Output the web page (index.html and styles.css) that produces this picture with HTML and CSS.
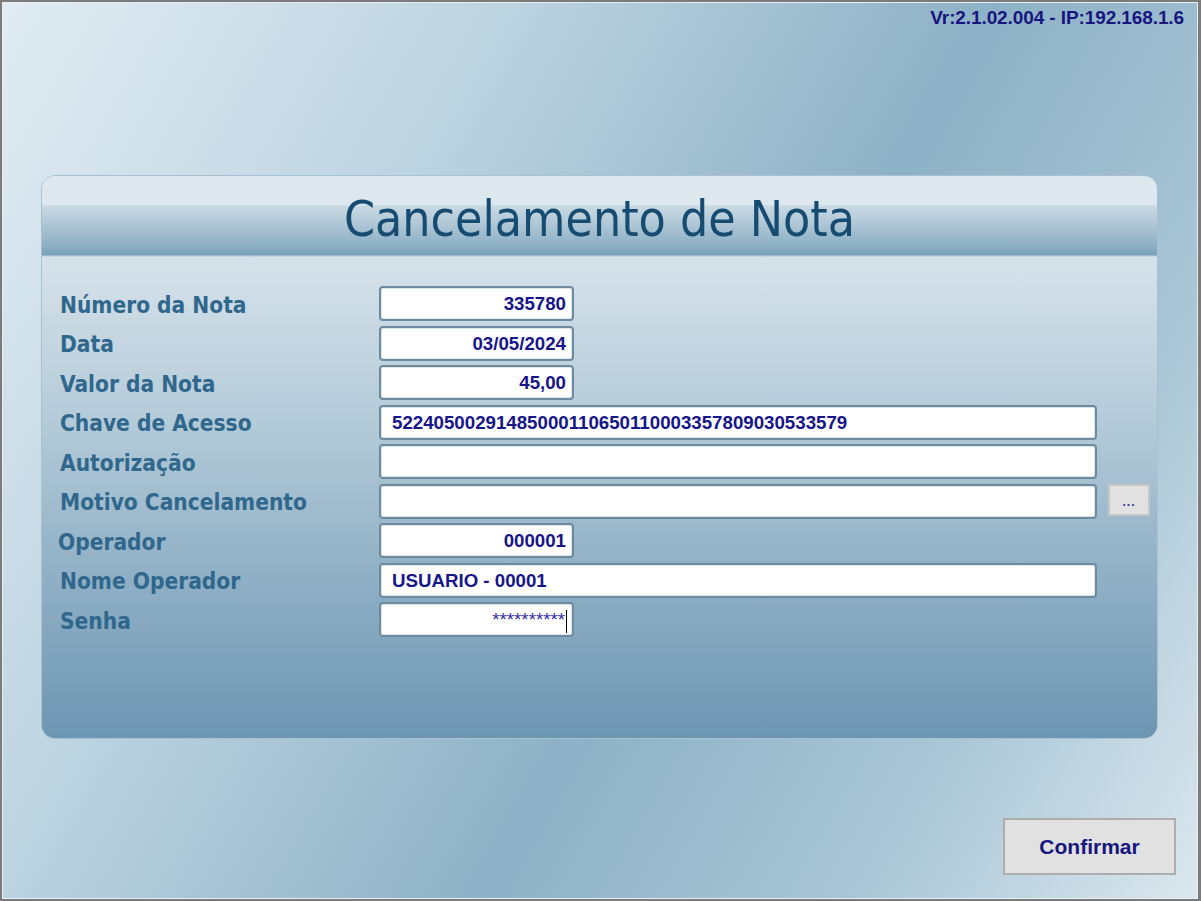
FILE: index.html
```html
<!DOCTYPE html>
<html lang="pt-BR">
<head>
    <meta charset="UTF-8" />
    <title>Cancelamento de Nota</title>
    <link rel="stylesheet" href="styles.css">
</head>
<body>
    <div class="window">
        <div class="version">Vr:2.1.02.004 - IP:192.168.1.6</div>

        <!-- painel principal -->
        <div class="panel">
            <div class="panel-head">
                <h1>Cancelamento de Nota</h1>
            </div>
            <div class="panel-body">
                <div class="form-row">
                    <label class="lbl">Número da Nota</label>
                    <div class="field short right">335780</div>
                </div>
                <div class="form-row">
                    <label class="lbl">Data</label>
                    <div class="field short right">03/05/2024</div>
                </div>
                <div class="form-row">
                    <label class="lbl">Valor da Nota</label>
                    <div class="field short right">45,00</div>
                </div>
                <div class="form-row">
                    <label class="lbl">Chave de Acesso</label>
                    <div class="field long">52240500291485000110650110003357809030533579</div>
                </div>
                <div class="form-row">
                    <label class="lbl">Autorização</label>
                    <div class="field long"></div>
                </div>
                <div class="form-row">
                    <label class="lbl">Motivo Cancelamento</label>
                    <div class="field long"></div>
                    <button type="button" class="btn-dots">...</button>
                </div>
                <div class="form-row">
                    <label class="lbl lbl-shift">Operador</label>
                    <div class="field short right">000001</div>
                </div>
                <div class="form-row">
                    <label class="lbl">Nome Operador</label>
                    <div class="field long">USUARIO - 00001</div>
                </div>
                <div class="form-row">
                    <label class="lbl">Senha</label>
                    <div class="field short right pw">**********<span class="caret"></span></div>
                </div>
            </div>
        </div>

        <div class="footer">
            <button type="button" class="btn-confirm">Confirmar</button>
        </div>
    </div>
</body>
</html>
```

FILE: styles.css
```css
html, body {
    margin:0;
    padding:0;
}
body {
    width:1201px;
    height:901px;
    overflow:hidden;
    font-family:"Liberation Sans", Arial, sans-serif;
}
.window {
    width:1201px;
    height:901px;
    box-sizing:border-box;
    border:2px solid #7b7b7b;
    border-right-width:3px;
    box-shadow:inset 0 0 0 1px #e4eef4;
    background:linear-gradient(120deg, #e1ecf3 0%, #bcd3e0 30%, #8db1c6 58%, #a9c6d6 80%, #dbe7ee 100%);
    display:flex;
    flex-direction:column;
}
.version {
    text-align:right;
    padding:5px 14px 0 0;
    font-size:19px;
    font-weight:bold;
    color:#17167f;
    letter-spacing:-0.1px;
}

/* painel */
.panel {
    margin:146px 0 0 39px;
    width:1117px;
    height:564px;
    border-radius:14px;
    overflow:hidden;
    border:1px solid #a8c2d2;
    box-sizing:border-box;
    display:flex;
    flex-direction:column;
}
.panel-head {
    height:81px;
    flex:none;
    background:linear-gradient(to bottom, #dde8ef 0, #dce7ee 29px, #c8d9e3 30px, #b4cad8 45px, #a3bfd0 55px, #8cafc4 70px, #79a1ba 79px, #c4d6e1 80px);
    text-align:center;
}
.panel-head h1 {
    margin:0;
    padding-top:3px;
    line-height:80px;
    font-family:"DejaVu Sans", sans-serif;
    font-stretch:condensed;
    font-weight:normal;
    font-size:49.5px;
    color:#174c72;
}
.panel-body {
    flex:1;
    background:linear-gradient(to bottom, #d6e2ea 0%, #b3cad8 35%, #91b1c6 65%, #6d96b3 100%);
    padding:29px 0 0 18px;
    display:flex;
    flex-direction:column;
    gap:4.5px;
}
.form-row {
    display:flex;
    align-items:center;
    height:35px;
}
.lbl {
    width:319px;
    flex:none;
    font-family:"DejaVu Sans", sans-serif;
    font-stretch:condensed;
    font-weight:bold;
    font-size:22.5px;
    color:#30678d;
    margin-top:2px;
}
.lbl-shift {
    margin-left:-2px;
    width:321px;
}
.field {
    box-sizing:border-box;
    height:35px;
    border:2px solid #6c8ba0;
    border-radius:4px;
    background:#fff;
    box-shadow:inset 0 0 0 1px #dfe6ea;
    padding:0 6px 0 11px;
    font-size:18.7px;
    font-weight:bold;
    color:#17158a;
    line-height:31px;
    white-space:nowrap;
    overflow:hidden;
}
.short {
    width:195px;
}
.long {
    width:718px;
}
.right {
    text-align:right;
}
.pw {
    color:#3530a8;
    font-weight:normal;
    padding-right:5px;
}
.caret {
    display:inline-block;
    width:1px;
    height:23px;
    background:#000;
    vertical-align:middle;
    margin-left:1px;
}
.btn-dots {
    margin-left:11px;
    width:42px;
    height:32px;
    margin-top:-2px;
    background:#e1e1e1;
    border:2px solid #c6c6c6;
    color:#3a35b0;
    font-size:12px;
    font-weight:bold;
    padding:4px 0 0 0;
    letter-spacing:1px;
}

/* rodape */
.footer {
    margin-top:auto;
    display:flex;
    justify-content:flex-end;
    padding:0 22px 24px 0;
}
.btn-confirm {
    width:173px;
    height:57px;
    background:#e1e1e1;
    border:2px solid #adadad;
    font-family:"Liberation Sans", Arial, sans-serif;
    font-size:21px;
    font-weight:bold;
    color:#17157e;
    padding:0;
}
```
